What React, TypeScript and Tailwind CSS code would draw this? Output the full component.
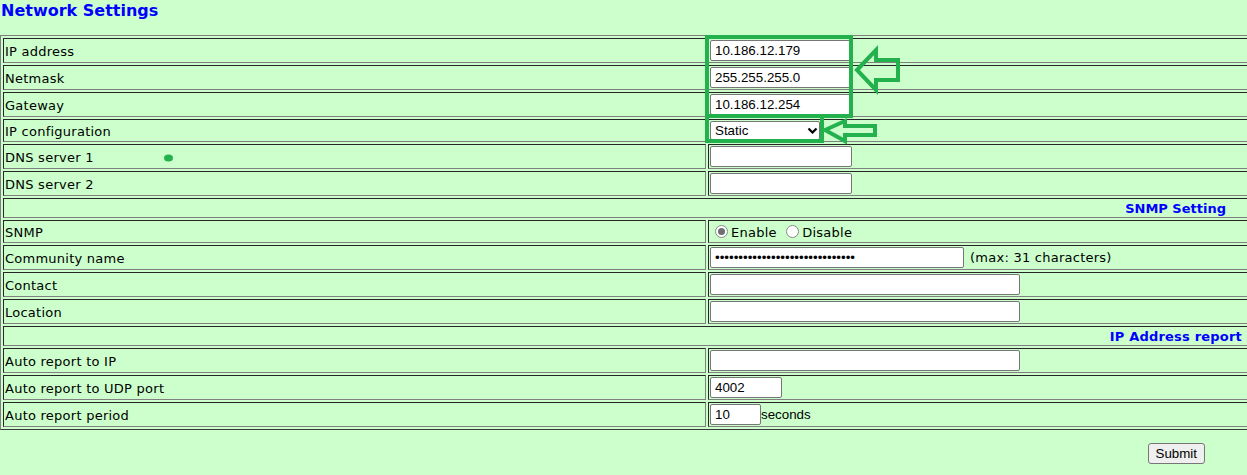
import React from "react";

const labelCell =
  "w-[703px] shrink-0 border border-t-[#262626] border-l-[#262626] border-b-[#808080] border-r-[#808080] p-[1px]";
const valueCell =
  "flex-1 border border-t-[#262626] border-l-[#262626] border-b-[#808080] border-r-[#808080] p-[1px]";
const fullCell =
  "flex-1 border border-t-[#262626] border-l-[#262626] border-b-[#808080] border-r-[#808080] p-[1px]";
const inputCls =
  "h-[21px] border border-[#767676] rounded-[2px] bg-white pl-[4px] pr-[3px] text-[13.33px] tracking-normal font-['Liberation_Sans',Arial,sans-serif] text-black outline-none";

function Row({
  label,
  h,
  children,
}: {
  label: string;
  h: "21" | "19";
  children?: React.ReactNode;
}) {
  return (
    <div className="flex gap-[2px]">
      <div className={labelCell}>
        <div
          className={
            h === "21"
              ? "h-[21px] pt-[1px] flex items-center"
              : "h-[19px] pt-[1px] flex items-center"
          }
        >
          {label}
        </div>
      </div>
      <div className={valueCell}>
        <div
          className={
            h === "21"
              ? "h-[21px] flex items-center"
              : "h-[19px] flex items-center"
          }
        >
          {children}
        </div>
      </div>
    </div>
  );
}

function Heading({ text, pad }: { text: string; pad: "snmp" | "ip" }) {
  return (
    <div className="flex gap-[2px]">
      <div className={fullCell}>
        <div
          className={
            pad === "snmp"
              ? "h-[16px] flex items-center justify-end pr-[25px] font-bold tracking-normal text-[#0000ff]"
              : "h-[16px] flex items-center justify-end pr-[9px] font-bold tracking-[0.2px] text-[#0000ff]"
          }
        >
          {text}
        </div>
      </div>
    </div>
  );
}

function Radio({ checked }: { checked?: boolean }) {
  return (
    <span className="ml-[5px] mr-[3px] w-[13px] h-[13px] rounded-full border border-[#8a8a8a] bg-white flex items-center justify-center shrink-0">
      {checked ? (
        <span className="w-[7px] h-[7px] rounded-full bg-[#6f6f6f]" />
      ) : null}
    </span>
  );
}

export default function App() {
  const bullets = "••••••••••••••••••••••••••••••";
  return (
    <div className="relative w-full h-[475px] overflow-hidden bg-[#ccffcc] text-black font-['DejaVu_Sans',Verdana,sans-serif] text-[13px] tracking-[0.25px]">
      <div className="h-[35px] pt-[1px] pl-[1px] leading-[19px] text-[16px] tracking-normal font-bold text-[#0000ff]">
        Network Settings
      </div>

      <div className="w-[1256px] border border-t-[#808080] border-l-[#808080] border-b-[#3a3a3a] border-r-[#3a3a3a] p-[2px] flex flex-col gap-[2px] leading-[15px]">
        <Row label="IP address" h="21">
          <input readOnly value="10.186.12.179" className={inputCls + " w-[142px]"} />
        </Row>
        <Row label="Netmask" h="21">
          <input readOnly value="255.255.255.0" className={inputCls + " w-[142px]"} />
        </Row>
        <Row label="Gateway" h="21">
          <input readOnly value="10.186.12.254" className={inputCls + " w-[142px]"} />
        </Row>
        <Row label="IP configuration" h="19">
          <div className="w-[110px] h-[19px] border border-[#767676] rounded-[2px] bg-white flex items-center justify-between pl-[4px] pr-[1px] text-[13.33px] tracking-normal font-['Liberation_Sans',Arial,sans-serif]">
            <span>Static</span>
            <svg width="11" height="7" viewBox="0 0 11 7">
              <path d="M1.5 1.5 L5.5 5.5 L9.5 1.5" fill="none" stroke="#000" strokeWidth="2.2" />
            </svg>
          </div>
        </Row>
        <Row label="DNS server 1" h="21">
          <input readOnly value="" className={inputCls + " w-[142px]"} />
        </Row>
        <Row label="DNS server 2" h="21">
          <input readOnly value="" className={inputCls + " w-[142px]"} />
        </Row>
        <Heading text="SNMP Setting" pad="snmp" />
        <Row label="SNMP" h="19">
          <Radio checked />
          <span className="pt-[1px]">Enable</span>
          <span>&nbsp;</span>
          <Radio />
          <span className="pt-[1px]">Disable</span>
        </Row>
        <Row label="Community name" h="21">
          <input readOnly value={bullets} className={inputCls + " w-[254px]"} />
          <span className="ml-[6px]">(max: 31 characters)</span>
        </Row>
        <Row label="Contact" h="21">
          <input readOnly value="" className={inputCls + " w-[310px]"} />
        </Row>
        <Row label="Location" h="21">
          <input readOnly value="" className={inputCls + " w-[310px]"} />
        </Row>
        <Heading text="IP Address report" pad="ip" />
        <Row label="Auto report to IP" h="21">
          <input readOnly value="" className={inputCls + " w-[310px]"} />
        </Row>
        <Row label="Auto report to UDP port" h="21">
          <input readOnly value="4002" className={inputCls + " w-[72px]"} />
        </Row>
        <Row label="Auto report period" h="21">
          <input readOnly value="10" className={inputCls + " w-[51px]"} />
          <span className="text-[13.33px] tracking-normal font-['Liberation_Sans',Arial,sans-serif]">seconds</span>
        </Row>
      </div>

      <div className="flex justify-end pr-[42px] mt-[13px]">
        <button className="h-[21px] px-[7px] border border-[#767676] rounded-[3px] bg-[#efefef] text-[13.33px] tracking-normal leading-[15px] font-['Liberation_Sans',Arial,sans-serif] text-black">
          Submit
        </button>
      </div>

      <svg
        className="absolute left-0 top-0 pointer-events-none"
        width="1247"
        height="475"
        viewBox="0 0 1247 475"
      >
        <rect x="707" y="37" width="144" height="79" fill="none" stroke="#22b14c" strokeWidth="4" />
        <rect x="707" y="116" width="115" height="25" fill="none" stroke="#22b14c" strokeWidth="4" />
        <polygon
          points="857,70 876,50 876,60 898,60 898,80 876,80 876,90"
          fill="none"
          stroke="#22b14c"
          strokeWidth="4"
        />
        <polygon
          points="825,130 845,121 845,126 875,126 875,135 845,135 845,141"
          fill="none"
          stroke="#22b14c"
          strokeWidth="4"
        />
        <ellipse cx="168.5" cy="158" rx="4.5" ry="3.5" fill="#22b14c" />
      </svg>
    </div>
  );
}
